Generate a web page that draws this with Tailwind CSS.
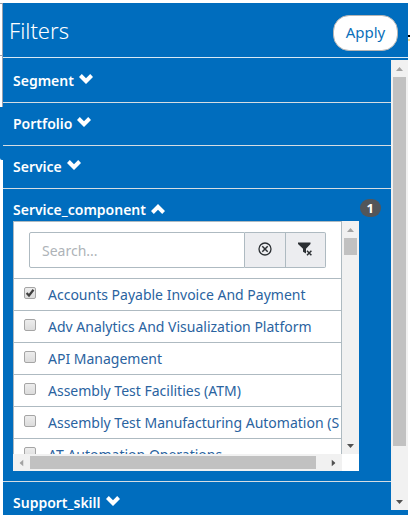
<!DOCTYPE html>
<html lang="en">
<head>
<meta charset="utf-8">
<meta name="viewport" content="width=device-width, initial-scale=1">
<title>Filters</title>
<script src="https://cdn.jsdelivr.net/npm/@tailwindcss/browser@4"></script>
</head>
<body class="bg-white font-['Noto_Sans','Open_Sans',sans-serif] text-[14px] leading-5">
<svg class="hidden">
  <symbol id="chevron" viewBox="0 0 14 10"><path d="M0 3 L2.8 0 L7 4.2 L11.2 0 L14 3 L7 10 Z" fill="currentColor"/></symbol>
  <symbol id="tri" viewBox="0 0 7 4"><path d="M0 4 L3.5 0 L7 4 Z" fill="currentColor"/></symbol>
</svg>
<div class="flex h-screen overflow-hidden py-[3px]">
  <div class="flex w-[3px] shrink-0 flex-col" aria-hidden="true">
    <div class="h-[53px] border-y border-r border-gray-400"></div>
    <div class="h-[51px] border-r border-gray-400"></div>
    <div class="h-[53px] rounded-bl-[2px] bg-[#006dbe]"></div>
  </div>
  <aside class="flex min-w-0 flex-1 flex-col bg-[#006dbe] text-white">
    <header class="flex h-[55px] shrink-0 items-center justify-between border-b border-white/85 pr-[10px] pl-[6px]">
      <h1 class="text-[22px] leading-7 font-light">Filters</h1>
      <button type="button" class="mt-[6px] h-9 w-[65px] rounded-[16px] border border-[#b5b5b5] bg-white pb-[2px] text-[15px] text-[#0b6fba]">Apply</button>
    </header>
    <div class="flex min-h-0 flex-1">
      <div class="min-w-0 flex-1 overflow-hidden">
        <section class="border-b border-[#d5dde3] pt-[13px] pb-[11px] pl-[10px]">
          <button type="button" class="flex items-center gap-[5px] font-semibold">Segment <svg class="mb-1 h-[10px] w-[14px]"><use href="#chevron"/></svg></button>
        </section>
        <section class="border-b border-[#d5dde3] py-[11px] pl-[10px]">
          <button type="button" class="flex items-center gap-[5px] font-semibold">Portfolio <svg class="mb-1 h-[10px] w-[14px]"><use href="#chevron"/></svg></button>
        </section>
        <section class="border-b border-[#d5dde3] py-[11px] pl-[10px]">
          <button type="button" class="flex items-center gap-[5px] font-semibold">Service <svg class="mb-1 h-[10px] w-[14px]"><use href="#chevron"/></svg></button>
        </section>
        <section class="border-b border-[#d5dde3] p-[10px]">
          <div class="flex h-[22px] items-start justify-between">
            <button type="button" class="flex items-center gap-[5px] pt-px font-semibold">Service_component <svg class="mb-[2px] h-[10px] w-[14px] rotate-180"><use href="#chevron"/></svg></button>
            <span class="rounded-full bg-[#53565a] px-[7px] text-center text-[13px] leading-[18px] font-bold">1</span>
          </div>
          <div class="mr-[22px] grid h-[250px] grid-cols-[minmax(0,1fr)_17px] grid-rows-[minmax(0,1fr)_17px] bg-white text-[#2a639f]">
            <div class="overflow-hidden border-x border-t border-[#aebac1]">
              <div class="flex h-[56px] pt-[10px] pr-[15px] pl-[15px]">
                <input type="text" aria-label="Search" placeholder="Search..." class="h-9 min-w-0 flex-1 rounded-l-[2px] border border-[#aebac1] bg-white px-3 text-[14px] outline-none placeholder:text-[#aeb3b8]">
                <button type="button" aria-label="Clear search" class="flex h-9 w-[41px] items-center justify-center border-y border-r border-[#aebac1] bg-[#ecedf0] pb-[2px] text-[#2b2f33]">
                  <svg class="size-[14px]" viewBox="0 0 14 14" fill="none" stroke="currentColor" stroke-width="1.3"><circle cx="7" cy="7" r="6"/><path d="M4.3 4.3 L9.7 9.7 M9.7 4.3 L4.3 9.7" stroke-width="1.5"/></svg>
                </button>
                <button type="button" aria-label="Clear filter" class="flex h-9 w-10 items-center justify-center rounded-r-[2px] border-y border-r border-[#aebac1] bg-[#ecedf0] pb-[2px] text-[#2b2f33]">
                  <svg class="h-[14px] w-[15px]" viewBox="0 0 15 14"><path d="M0 0.5 H12.5 V2 L8 6.7 V11.5 L5 9.8 V6.7 L0 2 Z" fill="currentColor"/><path d="M9 8.8 L13.4 13.2 M13.4 8.8 L9 13.2" stroke="currentColor" stroke-width="1.5"/></svg>
                </button>
              </div>
              <ul class="whitespace-nowrap">
                <li class="border-t border-[#aebac1]"><label class="flex h-[31px] items-center gap-3 pl-[10px]"><span class="mb-1 grid shrink-0"><input type="checkbox" checked class="peer col-start-1 row-start-1 size-3 appearance-none rounded-[2px] border border-[#a5a5a5] bg-linear-to-b from-[#ededed] to-[#dcdcdc]"><svg class="invisible col-start-1 row-start-1 size-3 peer-checked:visible" viewBox="0 0 12 12" fill="none" stroke="#404040" stroke-width="2.2"><path d="M2.6 6 L5 8.5 L9.5 2.8"/></svg></span>Accounts Payable Invoice And Payment</label></li>
                <li class="border-t border-[#aebac1]"><label class="flex h-[31px] items-center gap-3 pl-[10px]"><input type="checkbox" class="mb-1 size-3 shrink-0 appearance-none rounded-[2px] border border-[#a5a5a5] bg-linear-to-b from-[#ededed] to-[#dcdcdc]">Adv Analytics And Visualization Platform</label></li>
                <li class="border-t border-[#aebac1]"><label class="flex h-[31px] items-center gap-3 pl-[10px]"><input type="checkbox" class="mb-1 size-3 shrink-0 appearance-none rounded-[2px] border border-[#a5a5a5] bg-linear-to-b from-[#ededed] to-[#dcdcdc]">API Management</label></li>
                <li class="border-t border-[#aebac1]"><label class="flex h-[31px] items-center gap-3 pl-[10px]"><input type="checkbox" class="mb-1 size-3 shrink-0 appearance-none rounded-[2px] border border-[#a5a5a5] bg-linear-to-b from-[#ededed] to-[#dcdcdc]">Assembly Test Facilities (ATM)</label></li>
                <li class="border-t border-[#aebac1]"><label class="flex h-[31px] items-center gap-3 pl-[10px]"><input type="checkbox" class="mb-1 size-3 shrink-0 appearance-none rounded-[2px] border border-[#a5a5a5] bg-linear-to-b from-[#ededed] to-[#dcdcdc]">Assembly Test Manufacturing Automation (S</label></li>
                <li class="border-t border-[#aebac1]"><label class="flex h-[31px] items-center gap-3 pl-[10px]"><input type="checkbox" class="mb-1 size-3 shrink-0 appearance-none rounded-[2px] border border-[#a5a5a5] bg-linear-to-b from-[#ededed] to-[#dcdcdc]">AT Automation Operations</label></li>
              </ul>
            </div>
            <div class="flex flex-col items-center bg-[#f1f1f1]" aria-hidden="true">
              <div class="flex h-[17px] items-center text-[#a3a3a3]"><svg class="h-1 w-[7px]"><use href="#tri"/></svg></div>
              <div class="h-[17px] w-[13px] bg-[#c1c1c1]"></div>
              <div class="mt-auto flex h-[17px] items-center text-[#505050]"><svg class="h-1 w-[7px] rotate-180"><use href="#tri"/></svg></div>
            </div>
            <div class="flex items-center bg-[#f1f1f1]" aria-hidden="true">
              <div class="flex w-[17px] shrink-0 justify-center text-[#a3a3a3]"><svg class="h-1 w-[7px] -rotate-90"><use href="#tri"/></svg></div>
              <div class="mr-[9px] h-[13px] flex-1 bg-[#c1c1c1]"></div>
              <div class="flex w-[17px] shrink-0 justify-center text-[#505050]"><svg class="h-1 w-[7px] rotate-90"><use href="#tri"/></svg></div>
            </div>
          </div>
        </section>
        <section class="py-[11px] pl-[10px]">
          <button type="button" class="flex items-center gap-[5px] font-semibold">Support_skill <svg class="mb-1 h-[10px] w-[14px]"><use href="#chevron"/></svg></button>
        </section>
      </div>
      <div class="mt-[2px] mb-[5px] flex w-[17px] shrink-0 flex-col items-center bg-[#f1f1f1]" aria-hidden="true">
        <div class="flex h-[17px] shrink-0 items-center text-[#a3a3a3]"><svg class="h-1 w-[7px]"><use href="#tri"/></svg></div>
        <div class="mb-[47px] w-[13px] flex-1 bg-[#c1c1c1]"></div>
        <div class="flex h-[17px] shrink-0 items-center text-[#505050]"><svg class="h-1 w-[7px] rotate-180"><use href="#tri"/></svg></div>
      </div>
    </div>
  </aside>
  <div class="w-[2px] shrink-0 pt-8" aria-hidden="true">
    <div class="h-[2px] bg-black"></div>
    <div class="mt-[2px] h-[2px] bg-[#f6dc8a]"></div>
  </div>
</div>
</body>
</html>
